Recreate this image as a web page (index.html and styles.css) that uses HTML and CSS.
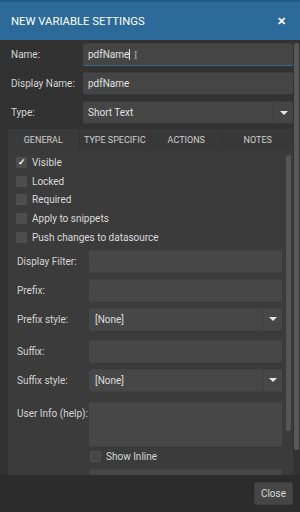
FILE: index.html
```html
<!DOCTYPE html>
<html lang="en">

<head>
    <meta charset="UTF-8">
    <meta name="viewport" content="width=device-width, initial-scale=1.0">
    <title>New Variable Settings</title>
    <link rel="stylesheet" href="styles.css">
</head>

<body>
    <div class="dialog">
        <div class="header">
            <span class="title">NEW VARIABLE SETTINGS</span>
            <span class="close-x">&#x2715;</span>
        </div>
        <div class="main">
            <div class="main-content">
                <div class="row">
                    <label class="label">Name:</label>
                    <div class="field focused">pdfName<span class="caret"></span><span class="ibeam">I</span></div>
                </div>
                <div class="row">
                    <label class="label">Display Name:</label>
                    <div class="field">pdfName</div>
                </div>
                <div class="row">
                    <label class="label">Type:</label>
                    <div class="field select"><span class="select-text">Short Text</span><span class="arrow"></span></div>
                </div>

                <div class="tabs">
                    <div class="tab active">GENERAL</div>
                    <div class="tab">TYPE SPECIFIC</div>
                    <div class="tab">ACTIONS</div>
                    <div class="tab">NOTES</div>
                </div>
                <div class="panel">
                    <div class="panel-content">
                        <div class="check"><span class="box checked">&#x2713;</span>Visible</div>
                        <div class="check"><span class="box"></span>Locked</div>
                        <div class="check"><span class="box"></span>Required</div>
                        <div class="check"><span class="box"></span>Apply to snippets</div>
                        <div class="check"><span class="box"></span>Push changes to datasource</div>

                        <div class="prow first">
                            <label class="plabel">Display Filter:</label>
                            <div class="pfield"></div>
                        </div>
                        <div class="prow">
                            <label class="plabel">Prefix:</label>
                            <div class="pfield"></div>
                        </div>
                        <div class="prow">
                            <label class="plabel">Prefix style:</label>
                            <div class="pfield select"><span class="select-text">[None]</span><span class="arrow"></span></div>
                        </div>
                        <div class="prow gap">
                            <label class="plabel">Suffix:</label>
                            <div class="pfield"></div>
                        </div>
                        <div class="prow">
                            <label class="plabel">Suffix style:</label>
                            <div class="pfield select"><span class="select-text">[None]</span><span class="arrow"></span></div>
                        </div>
                        <div class="prow gap top">
                            <label class="plabel">User Info (help):</label>
                            <div class="pfield area"></div>
                        </div>
                        <div class="inline-check"><span class="box dim"></span>Show Inline</div>
                        <div class="prow last">
                            <span class="plabel"></span>
                            <div class="pfield"></div>
                        </div>
                    </div>
                    <div class="inner-scroll"><div class="thumb"></div></div>
                </div>
            </div>
            <div class="outer-scroll"><div class="thumb"></div></div>
        </div>
        <div class="footer">
            <button class="close-btn">Close</button>
        </div>
    </div>
</body>

</html>
```

FILE: styles.css
```css
body {
    margin: 0;
    font-family: Roboto, "Liberation Sans", Arial, sans-serif;
    background-color: #2f2f2f;
    color: #dcdcdc;
}

.dialog {
    width: 300px;
    height: 512px;
    display: flex;
    flex-direction: column;
    overflow: hidden;
    background-color: #323232;
}

.header {
    height: 40px;
    flex: none;
    background-color: #2c6a99;
    border-top: 2px solid #25597f;
    box-sizing: border-box;
    display: flex;
    align-items: center;
    justify-content: space-between;
    padding: 0 14px 0 11px;
    color: #ffffff;
}

.title {
    font-size: 11.3px;
}

.close-x {
    font-size: 11px;
    font-weight: bold;
}

.main {
    flex: 1;
    display: flex;
    min-height: 0;
    overflow: hidden;
}

.main-content {
    flex: 1;
    padding: 3px 0 0 8px;
    min-width: 0;
}

.outer-scroll {
    width: 7px;
    flex: none;
    padding: 3px 1px 0 1px;
    box-sizing: border-box;
}

.outer-scroll .thumb {
    width: 5px;
    height: 407px;
    background-color: #585858;
    border-radius: 2px;
}

.row {
    display: flex;
    align-items: center;
    height: 23px;
    margin-bottom: 6px;
}

.label {
    width: 72px;
    flex: none;
    padding-left: 3px;
    font-size: 10px;
    color: #d6d6d6;
}

.field {
    flex: 1;
    height: 23px;
    box-sizing: border-box;
    background-color: #454545;
    border-top: 1px solid #3c3c3c;
    border-bottom: 1px solid #3a3a3a;
    border-radius: 2px;
    display: flex;
    align-items: center;
    padding-left: 5px;
    font-size: 10px;
    color: #e0e0e0;
}

.field.focused {
    border-bottom: 1px solid #3d6b8e;
}

.caret {
    width: 1px;
    height: 11px;
    background-color: #e0e0e0;
}

.ibeam {
    margin-left: 3px;
    font-family: "Liberation Serif", serif;
    font-size: 13px;
    color: #9a9a9a;
}

.select {
    padding-right: 0;
}

.select-text {
    flex: 1;
}

.arrow {
    width: 19px;
    height: 100%;
    border-left: 1px solid #3c3c3c;
    display: flex;
    align-items: center;
    justify-content: center;
}

.arrow::after {
    content: "";
    border-left: 4px solid transparent;
    border-right: 4px solid transparent;
    border-top: 4px solid #e8e8e8;
}

.tabs {
    display: flex;
    height: 22px;
    margin-top: -1px;
    background-color: #383838;
    margin-right: -1px;
}

.tab {
    flex: 1;
    display: flex;
    align-items: center;
    justify-content: center;
    font-size: 9px;
    color: #cfcfcf;
    border-right: 1px solid #333333;
}

.tab.active {
    background-color: #3a3a3a;
}

.panel {
    display: flex;
    background-color: #3b3b3b;
    height: 324px;
    overflow: hidden;
}

.panel-content {
    flex: 1;
    padding: 2px 0 0 8px;
    min-width: 0;
}

.inner-scroll {
    width: 6px;
    flex: none;
    padding: 4px 1px 0 0;
}

.inner-scroll .thumb {
    width: 5px;
    height: 276px;
    background-color: #555555;
    border-radius: 2px;
}

.check {
    display: flex;
    align-items: center;
    height: 18.75px;
    font-size: 10px;
    color: #dadada;
}

.box {
    width: 11px;
    height: 11px;
    flex: none;
    background-color: #4d4d4d;
    border-radius: 1px;
    margin-right: 5px;
    display: flex;
    align-items: center;
    justify-content: center;
    font-size: 9px;
    font-weight: bold;
    color: #ffffff;
}

.box.dim {
    background-color: #464646;
    border: 1px solid #505050;
    box-sizing: border-box;
}

.prow {
    display: flex;
    align-items: center;
    margin-top: 6px;
    margin-right: 4px;
}

.prow.first {
    margin-top: 3px;
}

.prow.gap {
    margin-top: 9px;
}

.prow.top {
    margin-top: 10px;
    align-items: flex-start;
}

.prow.top .plabel {
    padding-top: 6px;
}

.plabel {
    width: 72px;
    flex: none;
    padding-left: 1px;
    font-size: 10px;
    white-space: nowrap;
    color: #d4d4d4;
}

.pfield {
    flex: 1;
    height: 23px;
    box-sizing: border-box;
    background-color: #474747;
    border-top: 1px solid #424242;
    border-bottom: 1px solid #404040;
    border-radius: 2px;
    display: flex;
    align-items: center;
    padding-left: 6px;
    font-size: 10px;
    color: #dedede;
}

.pfield.area {
    height: 45px;
}

.inline-check {
    display: flex;
    align-items: center;
    height: 18px;
    margin-top: 1px;
    padding-left: 74px;
    font-size: 10px;
    color: #d6d6d6;
}

.prow.last {
    margin-top: 3px;
}

.footer {
    height: 37px;
    flex: none;
    background-color: #2c2c2c;
    display: flex;
    align-items: flex-start;
    justify-content: flex-end;
    padding: 7px 7px 0 0;
    box-sizing: border-box;
}

.close-btn {
    font-family: Roboto, "Liberation Sans", Arial, sans-serif;
    font-size: 10px;
    color: #d8d8d8;
    background-color: #464646;
    border: 1px solid #3e3e3e;
    border-radius: 2px;
    height: 23px;
    padding: 0 6px;
}
```
